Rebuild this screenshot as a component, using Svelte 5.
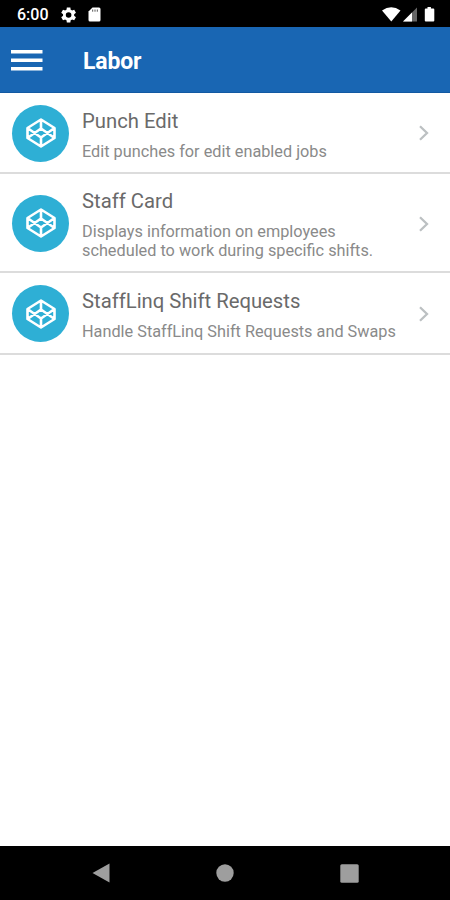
<script>
  const items = [
    { title: 'Punch Edit', lines: ['Edit punches for edit enabled jobs'], height: 81.5 },
    { title: 'Staff Card', lines: ['Displays information on employees', 'scheduled to work during specific shifts.'], height: 99 },
    { title: 'StaffLinq Shift Requests', lines: ['Handle StaffLinq Shift Requests and Swaps'], height: 82 }
  ];
</script>

<div class="screen">
  <div class="status">
    <span class="time">6:00</span>
    <svg class="gear" width="16" height="16" viewBox="2 2 20 20" fill="#fff"><path fill-rule="evenodd" d="M18.400 13a6.500 6.500 0 0 0 0-2l2.300-1.800-2.200-3.800-2.700 1.100a7 7 0 0 0-1.700-1L13.700 2.700H9.300l-.4 2.800a7 7 0 0 0-1.700 1L4.500 5.400 2.300 9.200 4.600 11a6.500 6.500 0 0 0 0 2l-2.300 1.800 2.200 3.800 2.700-1.100a7 7 0 0 0 1.700 1l.4 2.800h4.400l.4-2.800a7 7 0 0 0 1.700-1l2.700 1.100 2.200-3.800zM11.500 8.500a3.500 3.500 0 1 1 0 7 3.500 3.500 0 0 1 0-7z"/></svg>
    <svg class="sd" width="13" height="15" viewBox="0 0 13 15"><path fill="#fff" d="M4.500.5H11q1.500 0 1.500 1.500v11q0 1.500-1.500 1.500H2Q.5 14.500.5 13V4.500z"/><path d="M4.700 2.500v2.200M7 2.500v2.200M9.300 2.500v2.200" stroke="#555" stroke-width="1"/></svg>
    <svg class="signals" width="54" height="17" viewBox="0 0 54 17" fill="#fff">
      <path d="M0 4.500Q9.200-2 18.500 4.500L9.300 15.500z"/>
      <path fill="#666" d="M35 1.500V15.500H21z"/>
      <path d="M30 6.500v9h-9z"/>
      <path d="M45.500 1h3.400v1.500h2.400q1 0 1 1v11q0 1-1 1h-7.500q-1 0-1-1v-11q0-1 1-1h1.700z"/>
    </svg>
  </div>
  <header>
    <svg class="menu" width="32" height="22" viewBox="0 0 32 22"><path d="M0 2.800h31.500M0 11.300h31.500M0 19.800h31.500" stroke="#fff" stroke-width="3.600"/></svg>
    <h1>Labor</h1>
  </header>
  <main>
    {#each items as item}
      <div class="row" style:height="{item.height}px">
        <div class="badge">
          <svg width="32" height="32" viewBox="0 0 32 32" fill="none" stroke="#fff" stroke-width="2.600" stroke-linejoin="round"><path d="M16 2.500 29.500 11v10L16 29.500 2.500 21V11zM16 2.500v9M16 20.500v9M2.500 11 16 20.500 29.500 11M2.500 21 16 11.500 29.500 21"/></svg>
        </div>
        <div class="copy">
          <h2>{item.title}</h2>
          <p>{#each item.lines as line}<span>{line}</span>{/each}</p>
        </div>
        <svg class="chevron" width="12" height="18" viewBox="0 0 12 18"><path d="m2 2.200 7 6.800-7 6.800" fill="none" stroke="#bcc0c2" stroke-width="2.300"/></svg>
      </div>
    {/each}
  </main>
  <nav>
    <svg width="18" height="20" viewBox="0 0 18 20"><path fill="#9e9e9e" d="M17.500.5v19L.5 10z"/></svg>
    <svg width="18" height="18" viewBox="0 0 18 18"><circle cx="9" cy="9" r="8.700" fill="#9e9e9e"/></svg>
    <svg width="19" height="19" viewBox="0 0 19 19"><rect x=".3" y=".3" width="18.400" height="18.400" rx="1.500" fill="#9e9e9e"/></svg>
  </nav>
</div>

<style>
  .screen { width: 450px; height: 900px; display: flex; flex-direction: column; background: #fff; font-family: Roboto, sans-serif; overflow: hidden; }
  .status { height: 27px; flex: none; background: #000; display: flex; align-items: center; padding: 2px 15px 0 17px; box-sizing: border-box; }
  .time { color: #fff; font-size: 16px; font-weight: 500; width: 44px; }
  .sd { margin-left: 11px; }
  .signals { margin-left: auto; margin-right: -1px; }
  header { height: 65.500px; flex: none; box-sizing: border-box; background: #1966b3; display: flex; align-items: center; padding: 1px 11px 0; border-bottom: 1px solid #1259a2; }
  h1 { margin: 4px 0 0 40px; color: #fff; font-size: 23px; line-height: 28px; font-weight: 700; letter-spacing: -.15px; }
  main { flex: 1; }
  .row { display: flex; align-items: center; box-sizing: border-box; border-bottom: 2px solid #dcdcdc; padding: 0 20px 0 12px; }
  .badge { width: 57px; height: 57px; border-radius: 50%; background: #2eafd5; display: flex; align-items: center; justify-content: center; margin-top: 1.500px; }
  .copy { flex: 1; margin: 4.500px 0 0 13px; white-space: nowrap; }
  h2 { margin: 0; font-size: 20.270px; line-height: 24px; font-weight: 400; color: #6a6a6a; }
  p { margin: 9px 0 0; font-size: 16.270px; line-height: 19px; color: #8a8a8a; }
  p span { display: block; }
  .chevron { margin-top: 2px; }
  nav { height: 54px; flex: none; background: #000; display: flex; justify-content: space-between; align-items: center; padding: 0 91px 0 92px; }
</style>
